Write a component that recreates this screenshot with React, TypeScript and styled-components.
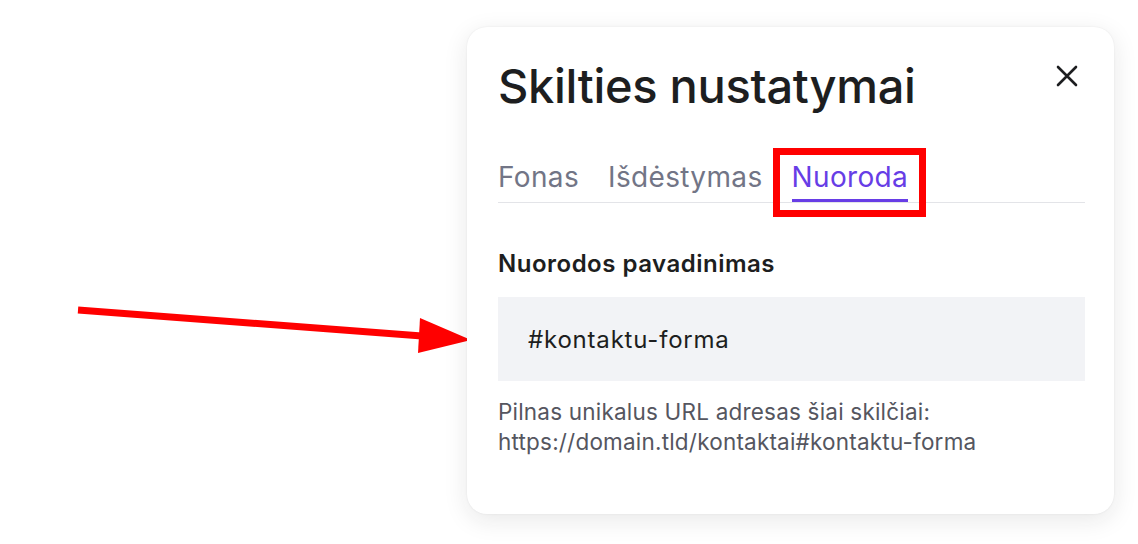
import React from 'react';
import styled, { createGlobalStyle } from 'styled-components';

const GlobalStyle = createGlobalStyle`
  html, body {
    margin: 0;
    padding: 0;
    background: #ffffff;
  }
  body {
    font-family: Inter, "Noto Sans", sans-serif;
  }
`;

const Page = styled.div`
  width: 1138px;
  height: 544px;
  display: flex;
  align-items: flex-start;
  overflow: hidden;
`;

// red pointer drawn to the left of the dialog
const Pointer = styled.div`
  width: 467px;
  flex-shrink: 0;
  padding-top: 280px;
  display: flex;
`;

const Card = styled.div`
  margin-top: 27px;
  width: 647px;
  height: 487px;
  box-sizing: border-box;
  padding: 31px 29px 0 31px;
  background: #ffffff;
  border-radius: 20px;
  box-shadow: 0 6px 24px rgba(29, 30, 32, 0.1), 0 0 2px rgba(29, 30, 32, 0.08);
  display: flex;
  flex-direction: column;
`;

const Header = styled.div`
  display: flex;
  justify-content: space-between;
  align-items: flex-start;
`;

const Title = styled.h1`
  margin: 0;
  font-size: 47px;
  line-height: 56px;
  font-weight: 500;
  color: #1d1e20;
  letter-spacing: -0.3px;
`;

const CloseButton = styled.button`
  border: none;
  background: none;
  padding: 0;
  margin-top: 6px;
  margin-right: 6px;
  width: 24px;
  height: 24px;
  display: flex;
  align-items: center;
  justify-content: center;
  color: #1d1e20;
  cursor: pointer;
`;

const Tabs = styled.div`
  display: flex;
  gap: 29px;
  margin-top: 45px;
  border-bottom: 1px solid #e3e4e8;
`;

const Tab = styled.div<{ $active?: boolean }>`
  position: relative;
  font-size: 28px;
  line-height: 36px;
  letter-spacing: 0.35px;
  padding-bottom: 4px;
  font-weight: 400;
  color: ${p => (p.$active ? '#673de6' : '#727586')};
  border-bottom: 3px solid ${p => (p.$active ? '#673de6' : 'transparent')};
`;

const Highlight = styled.span`
  position: absolute;
  left: -19px;
  right: -18px;
  top: -11px;
  bottom: -18px;
  border: 7px solid #ff0000;
  pointer-events: none;
`;

const Field = styled.div`
  margin-top: 46px;
  display: flex;
  flex-direction: column;
`;

const Label = styled.label`
  font-size: 24px;
  line-height: 30px;
  font-weight: 600;
  letter-spacing: 0.5px;
  color: #1d1e20;
`;

const Input = styled.input`
  margin-top: 18px;
  height: 84px;
  box-sizing: border-box;
  border: none;
  outline: none;
  background: #f2f3f6;
  padding: 0 30px;
  font-family: inherit;
  font-size: 24px;
  letter-spacing: 0.8px;
  color: #1d1e20;
`;

const Hint = styled.p`
  margin: 16px 0 0;
  font-size: 22.5px;
  line-height: 30px;
  letter-spacing: 0.2px;
  color: #55565f;
`;

const CloseIcon = () => (
  <svg width="22" height="22" viewBox="0 0 22 22" fill="none" stroke="currentColor" strokeWidth="2.6" strokeLinecap="round">
    <path d="M2 2 L20 20 M20 2 L2 20" />
  </svg>
);

const Arrow = () => (
  <svg width="467" height="80" viewBox="0 280 467 80">
    <path d="M78 310 L422 336" stroke="#ff0000" strokeWidth="7" />
    <polygon points="420,318 471,340 418,353" fill="#ff0000" />
  </svg>
);

export default function App() {
  return (
    <>
      <GlobalStyle />
      <Page>
        <Pointer>
          <Arrow />
        </Pointer>
        <Card>
          <Header>
            <Title>Skilties nustatymai</Title>
            <CloseButton aria-label="Uždaryti">
              <CloseIcon />
            </CloseButton>
          </Header>
          <Tabs>
            <Tab>Fonas</Tab>
            <Tab>Išdėstymas</Tab>
            <Tab $active>
              Nuoroda
              <Highlight />
            </Tab>
          </Tabs>
          <Field>
            <Label>Nuorodos pavadinimas</Label>
            <Input defaultValue="#kontaktu-forma" />
            <Hint>
              Pilnas unikalus URL adresas šiai skilčiai:
              <br />
              https://domain.tld/kontaktai#kontaktu-forma
            </Hint>
          </Field>
        </Card>
      </Page>
    </>
  );
}
